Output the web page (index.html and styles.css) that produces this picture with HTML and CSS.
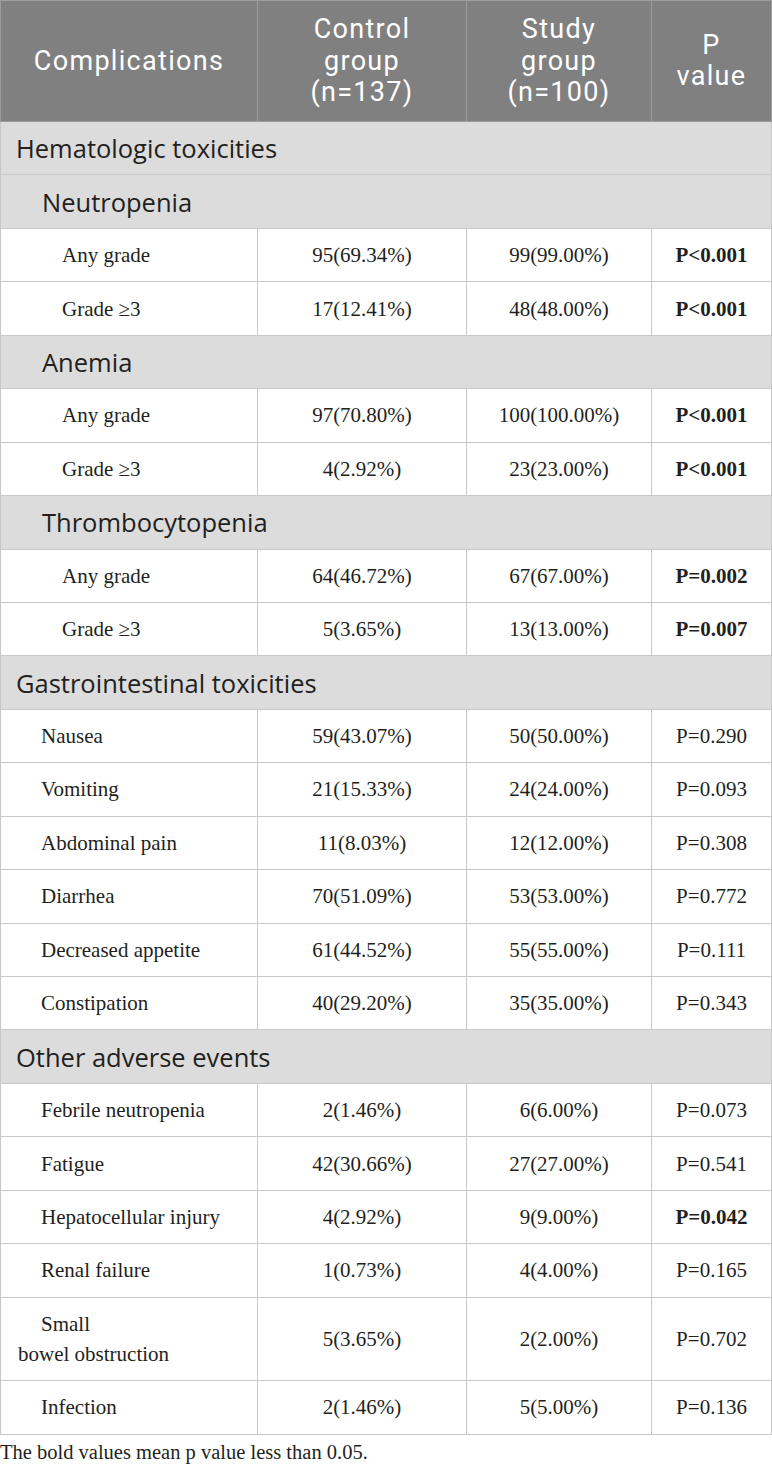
FILE: index.html
```html
<!DOCTYPE html>
<html>
  <head>
    <title>Complications</title>
    <link rel="stylesheet" href="styles.css">
  </head>
  <body>
    <table class="tox">
      <colgroup>
        <col class="c-name">
        <col class="c-ctrl">
        <col class="c-study">
        <col class="c-p">
      </colgroup>
      <thead>
        <tr>
          <th>Complications</th>
          <th>Control<br>group<br>(n=137)</th>
          <th>Study<br>group<br>(n=100)</th>
          <th>P<br>value</th>
        </tr>
      </thead>
      <tbody>
        <tr class="sec"><td colspan="4">Hematologic toxicities</td></tr>

        <tr class="sec sub"><td colspan="4">Neutropenia</td></tr>
        <tr><td class="name lvl2">Any grade</td><td>95(69.34%)</td><td>99(99.00%)</td><td class="sig">P&lt;0.001</td></tr>
        <tr><td class="name lvl2">Grade ≥3</td><td>17(12.41%)</td><td>48(48.00%)</td><td class="sig">P&lt;0.001</td></tr>

        <tr class="sec sub"><td colspan="4">Anemia</td></tr>
        <tr><td class="name lvl2">Any grade</td><td>97(70.80%)</td><td>100(100.00%)</td><td class="sig">P&lt;0.001</td></tr>
        <tr><td class="name lvl2">Grade ≥3</td><td>4(2.92%)</td><td>23(23.00%)</td><td class="sig">P&lt;0.001</td></tr>

        <tr class="sec sub"><td colspan="4">Thrombocytopenia</td></tr>
        <tr><td class="name lvl2">Any grade</td><td>64(46.72%)</td><td>67(67.00%)</td><td class="sig">P=0.002</td></tr>
        <tr><td class="name lvl2">Grade ≥3</td><td>5(3.65%)</td><td>13(13.00%)</td><td class="sig">P=0.007</td></tr>

        <tr class="sec"><td colspan="4">Gastrointestinal toxicities</td></tr>
        <tr><td class="name lvl1">Nausea</td><td>59(43.07%)</td><td>50(50.00%)</td><td>P=0.290</td></tr>
        <tr><td class="name lvl1">Vomiting</td><td>21(15.33%)</td><td>24(24.00%)</td><td>P=0.093</td></tr>
        <tr><td class="name lvl1">Abdominal pain</td><td>11(8.03%)</td><td>12(12.00%)</td><td>P=0.308</td></tr>
        <tr><td class="name lvl1">Diarrhea</td><td>70(51.09%)</td><td>53(53.00%)</td><td>P=0.772</td></tr>
        <tr><td class="name lvl1">Decreased appetite</td><td>61(44.52%)</td><td>55(55.00%)</td><td>P=0.111</td></tr>
        <tr><td class="name lvl1">Constipation</td><td>40(29.20%)</td><td>35(35.00%)</td><td>P=0.343</td></tr>

        <tr class="sec"><td colspan="4">Other adverse events</td></tr>
        <tr><td class="name lvl1">Febrile neutropenia</td><td>2(1.46%)</td><td>6(6.00%)</td><td>P=0.073</td></tr>
        <tr><td class="name lvl1">Fatigue</td><td>42(30.66%)</td><td>27(27.00%)</td><td>P=0.541</td></tr>
        <tr><td class="name lvl1">Hepatocellular injury</td><td>4(2.92%)</td><td>9(9.00%)</td><td class="sig">P=0.042</td></tr>
        <tr><td class="name lvl1">Renal failure</td><td>1(0.73%)</td><td>4(4.00%)</td><td>P=0.165</td></tr>
        <tr><td class="name lvl1">Small<br>bowel obstruction</td><td>5(3.65%)</td><td>2(2.00%)</td><td>P=0.702</td></tr>
        <tr><td class="name lvl1">Infection</td><td>2(1.46%)</td><td>5(5.00%)</td><td>P=0.136</td></tr>
      </tbody>
    </table>
    <p class="note">The bold values mean p value less than 0.05.</p>
  </body>
</html>
```

FILE: styles.css
```css
body { margin: 0; background: #fff; color: #231f20; font-family: "Liberation Serif", serif; }

.tox { width: 771px; border-collapse: collapse; table-layout: fixed; }
.c-name { width: 257px; }
.c-ctrl { width: 209px; }
.c-study { width: 185px; }
.c-p { width: 120px; }

.tox th {
  background: #808080;
  color: #fff;
  font-family: Roboto, sans-serif;
  font-weight: normal;
  font-size: 27px;
  letter-spacing: 1.3px;
  line-height: 31.5px;
  padding: 13px 4px 12.5px;
  border: 1px solid #9c9c9c;
  text-align: center;
  vertical-align: middle;
}

.tox td {
  border: 1px solid #c8c8c8;
  font-size: 21px;
  line-height: 30px;
  padding: 11.23px 6px;
  text-align: center;
  vertical-align: middle;
}
.tox td.name { text-align: left; padding-left: 17px; }
.tox td.lvl1 { text-indent: 23px; }
.tox td.lvl2 { text-indent: 44px; }
.tox td.sig { font-weight: bold; }

.sec td {
  background: #dcdcdc;
  font-family: "Open Sans", sans-serif;
  font-size: 25.5px;
  text-align: left;
  padding-left: 15px;
}
.sec.sub td { text-indent: 26px; }

.note { margin: 5px 0 0; font-size: 20.5px; line-height: 24px; }
```
